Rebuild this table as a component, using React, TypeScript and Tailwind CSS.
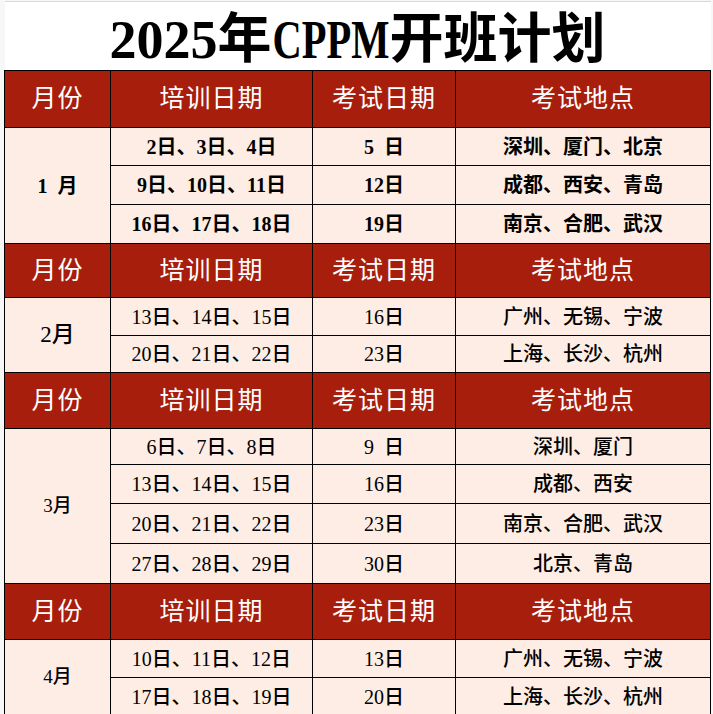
const serif = { fontFamily: '"Liberation Serif", "Noto Sans CJK SC", serif' };

type Row = [string, string, string, number];
type Section = { month: string; monthCls: string; head: number; bold: boolean; rows: Row[] };

const sections: Section[] = [
  {
    month: '1  月',
    monthCls: 'text-[20px] font-bold',
    head: 57,
    bold: true,
    rows: [
      ['2日、3日、4日', '5  日', '深圳、厦门、北京', 38],
      ['9日、10日、11日', '12日', '成都、西安、青岛', 39],
      ['16日、17日、18日', '19日', '南京、合肥、武汉', 39],
    ],
  },
  {
    month: '2月',
    monthCls: 'text-[23px] font-medium',
    head: 54,
    bold: false,
    rows: [
      ['13日、14日、15日', '16日', '广州、无锡、宁波', 38],
      ['20日、21日、22日', '23日', '上海、长沙、杭州', 37],
    ],
  },
  {
    month: '3月',
    monthCls: 'text-[19px] font-medium',
    head: 56,
    bold: false,
    rows: [
      ['6日、7日、8日', '9  日', '深圳、厦门', 36],
      ['13日、14日、15日', '16日', '成都、西安', 39],
      ['20日、21日、22日', '23日', '南京、合肥、武汉', 40],
      ['27日、28日、29日', '30日', '北京、青岛', 40],
    ],
  },
  {
    month: '4月',
    monthCls: 'text-[19px] font-medium',
    head: 56,
    bold: false,
    rows: [
      ['10日、11日、12日', '13日', '广州、无锡、宁波', 38],
      ['17日、18日、19日', '20日', '上海、长沙、杭州', 38],
    ],
  },
];

const headCell = 'border border-black bg-[#a81e0c] text-white text-[25px] tracking-[1px] font-normal text-center align-middle';
const bodyCell = 'border border-black bg-[#fdede4] text-black text-[20px] text-center align-middle leading-none whitespace-pre';

export default function App() {
  return (
    <div className="w-[713px] h-[714px] overflow-hidden bg-[#f7f7f7] pl-1 pt-px" style={serif}>
      <table className="table-fixed border-collapse w-[706px]">
        <colgroup>
          <col className="w-[106px]" />
          <col className="w-[202px]" />
          <col className="w-[143px]" />
          <col className="w-[255px]" />
        </colgroup>
        <tbody>
          <tr className="h-[69px]">
            <td colSpan={4} className="bg-white border-t border-[#d8d8d8] text-center align-middle pt-2 text-black font-bold text-[54px] leading-none">
              2025年<span className="inline-block scale-x-75 -mx-[19px]">CPPM</span>开班计划
            </td>
          </tr>
          {sections.map((s, si) => (
            <Section key={si} s={s} />
          ))}
        </tbody>
      </table>
    </div>
  );
}

function Section({ s }: { s: Section }) {
  const weight = s.bold ? 'font-bold' : 'font-medium';
  return (
    <>
      <tr style={{ height: s.head }}>
        <td className={headCell}>月份</td>
        <td className={headCell}>培训日期</td>
        <td className={headCell}>考试日期</td>
        <td className={headCell}>考试地点</td>
      </tr>
      {s.rows.map((r, i) => (
        <tr key={i} style={{ height: r[3] }}>
          {i === 0 && (
            <td rowSpan={s.rows.length} className={`border border-black bg-[#fdede4] text-black text-center align-middle whitespace-pre ${s.monthCls}`}>
              {s.month}
            </td>
          )}
          <td className={`${bodyCell} ${weight}`}>{r[0]}</td>
          <td className={`${bodyCell} ${weight}`}>{r[1]}</td>
          <td className={`${bodyCell} ${weight}`}>{r[2]}</td>
        </tr>
      ))}
    </>
  );
}
